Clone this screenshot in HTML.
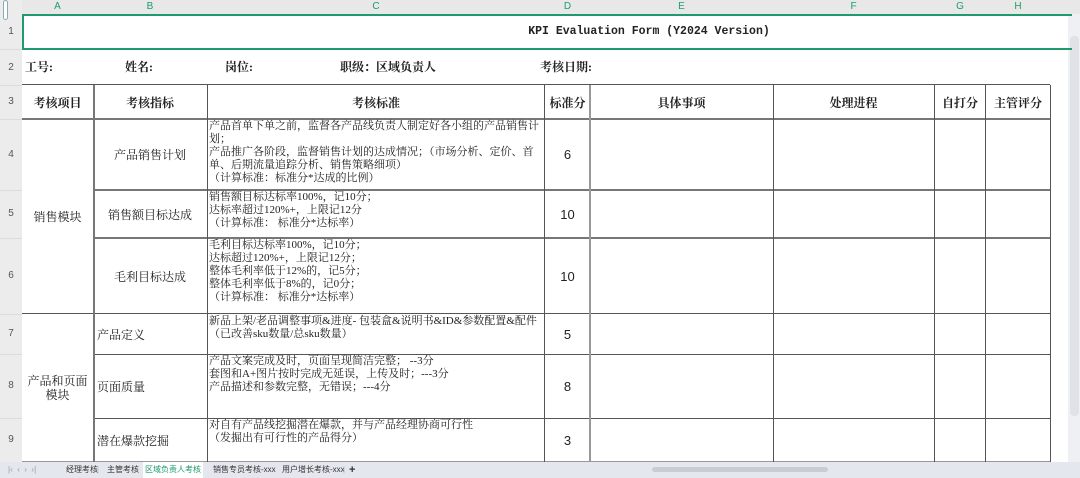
<!DOCTYPE html><html><head><meta charset="utf-8"><style>
*{margin:0;padding:0;box-sizing:border-box}
body{width:1080px;height:478px;overflow:hidden;background:#fff;position:relative;font-family:"Liberation Serif","Noto Serif CJK SC",serif;color:#222}
.a{position:absolute}
.h{position:absolute;height:1px;background:#555}
.v{position:absolute;width:1px;background:#555}
.gh{position:absolute;height:1px;background:#dcdcdc}
.col{position:absolute;top:0;height:14px;font:10px "Liberation Sans",sans-serif;color:#1e9b6e;text-align:center;line-height:14px}
.rn{position:absolute;left:0;width:22px;font:10px "Liberation Sans",sans-serif;color:#555;text-align:center}
.c{position:absolute;display:flex;align-items:center;justify-content:center;text-align:center;font-size:12px}
.t{position:absolute;font-size:11px;line-height:13px;white-space:nowrap}
.b{font-weight:bold}
.n{font-family:"Liberation Sans",sans-serif;font-size:13px}
</style></head><body>
<div class="a" style="left:0;top:0;width:1080px;height:14px;background:#e8e8e8"></div>
<div class="a" style="left:0;top:0;width:22px;height:478px;background:#ececec"></div>
<div class="a" style="left:3px;top:0;width:5px;height:20px;border:1px solid #8ab;border-radius:3px;background:#fff"></div>
<div class="col" style="left:22px;width:71px">A</div>
<div class="col" style="left:93px;width:114px">B</div>
<div class="col" style="left:207px;width:338px">C</div>
<div class="col" style="left:545px;width:45px">D</div>
<div class="col" style="left:590px;width:183px">E</div>
<div class="col" style="left:773px;width:161px">F</div>
<div class="col" style="left:934px;width:52px">G</div>
<div class="col" style="left:986px;width:64px">H</div>
<div class="rn" style="top:26px">1</div><div class="rn" style="top:62px">2</div><div class="rn" style="top:96px">3</div>
<div class="rn" style="top:149px">4</div><div class="rn" style="top:208px">5</div><div class="rn" style="top:270px">6</div>
<div class="rn" style="top:328px">7</div><div class="rn" style="top:380px">8</div><div class="rn" style="top:434px">9</div>
<div class="a" style="left:1068px;top:14px;width:12px;height:448px;background:#eef0f3"></div>
<div class="a" style="left:1070px;top:36px;width:9px;height:380px;background:#dfe2e6;border-radius:4px"></div>
<div class="gh" style="left:0;top:49px;width:22px"></div><div class="gh" style="left:0;top:85px;width:22px"></div>
<div class="gh" style="left:0;top:119px;width:22px"></div><div class="gh" style="left:0;top:190px;width:22px"></div>
<div class="gh" style="left:0;top:238px;width:22px"></div><div class="gh" style="left:0;top:314px;width:22px"></div>
<div class="gh" style="left:0;top:354px;width:22px"></div><div class="gh" style="left:0;top:418px;width:22px"></div>
<div class="a" style="left:22px;top:14px;width:1050px;height:36px;border:2px solid #1f9a6c;border-right:none"></div>
<div class="a" style="left:22px;top:25px;width:1254px;text-align:center;font:bold 11.5px 'Liberation Mono',monospace">KPI Evaluation Form (Y2024 Version)</div>
<div class="t b" style="left:25px;top:61px;font-size:12px">工号:</div>
<div class="t b" style="left:125px;top:61px;font-size:12px">姓名:</div>
<div class="t b" style="left:225px;top:61px;font-size:12px">岗位:</div>
<div class="t b" style="left:340px;top:61px;font-size:12px">职级：区域负责人</div>
<div class="t b" style="left:540px;top:61px;font-size:12px">考核日期:</div>
<div class="h" style="left:22px;top:84px;width:1028px"></div>
<div class="h" style="left:22px;top:118px;width:1028px;background:#777;height:2px"></div>
<div class="h" style="left:93px;top:189px;width:957px;background:#777;height:2px"></div>
<div class="h" style="left:93px;top:237px;width:957px;background:#777;height:2px"></div>
<div class="h" style="left:22px;top:313px;width:1028px"></div>
<div class="h" style="left:93px;top:354px;width:957px"></div>
<div class="h" style="left:93px;top:418px;width:957px"></div>
<div class="h" style="left:22px;top:461px;width:1028px;background:#999"></div>
<div class="v" style="left:93px;top:85px;height:377px;background:#777;width:2px"></div>
<div class="v" style="left:207px;top:85px;height:377px"></div>
<div class="v" style="left:544px;top:85px;height:377px"></div>
<div class="v" style="left:589px;top:85px;height:377px;background:#999;width:2px"></div>
<div class="v" style="left:773px;top:85px;height:377px"></div>
<div class="v" style="left:934px;top:85px;height:377px"></div>
<div class="v" style="left:985px;top:85px;height:377px"></div>
<div class="v" style="left:1050px;top:85px;height:377px"></div>
<div class="c b" style="left:22px;top:85px;width:71px;height:34px">考核项目</div>
<div class="c b" style="left:93px;top:85px;width:114px;height:34px">考核指标</div>
<div class="c b" style="left:207px;top:85px;width:338px;height:34px">考核标准</div>
<div class="c b" style="left:545px;top:85px;width:45px;height:34px">标准分</div>
<div class="c b" style="left:590px;top:85px;width:183px;height:34px">具体事项</div>
<div class="c b" style="left:773px;top:85px;width:161px;height:34px">处理进程</div>
<div class="c b" style="left:934px;top:85px;width:52px;height:34px">自打分</div>
<div class="c b" style="left:986px;top:85px;width:64px;height:34px">主管评分</div>
<div class="c" style="left:22px;top:119px;width:71px;height:195px">销售模块</div>
<div class="c" style="left:22px;top:314px;width:71px;height:148px;line-height:14px">产品和页面<br>模块</div>
<div class="c" style="left:93px;top:119px;width:114px;height:71px">产品销售计划</div>
<div class="c" style="left:93px;top:190px;width:114px;height:48px">销售额目标达成</div>
<div class="c" style="left:93px;top:238px;width:114px;height:76px">毛利目标达成</div>
<div class="c" style="left:97px;top:314px;height:40px;justify-content:flex-start">产品定义</div>
<div class="c" style="left:97px;top:354px;height:64px;justify-content:flex-start">页面质量</div>
<div class="c" style="left:97px;top:418px;height:44px;justify-content:flex-start">潜在爆款挖掘</div>
<div class="t" style="left:209px;top:120px">产品首单下单之前，监督各产品线负责人制定好各小组的产品销售计<br>划；<br>产品推广各阶段，监督销售计划的达成情况；（市场分析、定价、首<br>单、后期流量追踪分析、销售策略细项）<br>（计算标准：标准分*达成的比例）</div>
<div class="t" style="left:209px;top:191px">销售额目标达标率100%，记10分；<br>达标率超过120%+，上限记12分<br>（计算标准： 标准分*达标率）</div>
<div class="t" style="left:209px;top:239px">毛利目标达标率100%，记10分；<br>达标超过120%+，上限记12分；<br>整体毛利率低于12%的，记5分；<br>整体毛利率低于8%的，记0分；<br>（计算标准： 标准分*达标率）</div>
<div class="t" style="left:209px;top:315px">新品上架/老品调整事项&amp;进度- 包装盒&amp;说明书&amp;ID&amp;参数配置&amp;配件<br>（已改善sku数量/总sku数量）</div>
<div class="t" style="left:209px;top:355px">产品文案完成及时，页面呈现简洁完整； --3分<br>套图和A+图片按时完成无延误，上传及时；---3分<br>产品描述和参数完整，无错误；---4分</div>
<div class="t" style="left:209px;top:419px">对自有产品线挖掘潜在爆款，并与产品经理协商可行性<br>（发掘出有可行性的产品得分）</div>
<div class="c n" style="left:545px;top:119px;width:45px;height:71px">6</div>
<div class="c n" style="left:545px;top:190px;width:45px;height:48px">10</div>
<div class="c n" style="left:545px;top:238px;width:45px;height:76px">10</div>
<div class="c n" style="left:545px;top:314px;width:45px;height:40px">5</div>
<div class="c n" style="left:545px;top:354px;width:45px;height:64px">8</div>
<div class="c n" style="left:545px;top:418px;width:45px;height:44px">3</div>
<div class="a" style="left:0;top:462px;width:1080px;height:16px;background:#e4e8ee;font:8px 'Liberation Sans','Noto Sans CJK SC',sans-serif;color:#333;line-height:16px">
<span class="a" style="left:8px;color:#999">|‹ &nbsp;‹ &nbsp;› &nbsp;›|</span>
<span class="a" style="left:66px">经理考核</span>
<span class="a" style="left:97px;color:#bbb">|</span>
<span class="a" style="left:107px">主管考核</span>
<span class="a" style="left:143px;top:0;width:60px;height:16px;background:#fff;color:#1a9a6a;text-align:center">区域负责人考核</span>
<span class="a" style="left:213px">销售专员考核-xxx</span>
<span class="a" style="left:282px">用户增长考核-xxx</span>
<span class="a" style="left:343px;color:#bbb">|</span>
<span class="a" style="left:349px;font-size:11px;font-weight:bold">+</span>
<div class="a" style="left:652px;top:5px;width:176px;height:5px;background:#c9cdd3;border-radius:3px"></div>
</div>
</body></html>
